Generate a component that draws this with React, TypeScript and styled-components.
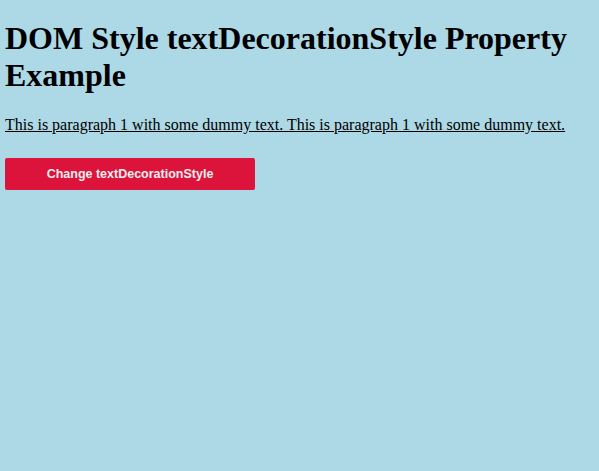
import React, { useState } from 'react'
import styled, { createGlobalStyle } from 'styled-components'

const GlobalStyle = createGlobalStyle`
   body {
      margin: 0 5px;
      background: lightblue;
      font-family: "Liberation Serif", "Times New Roman", serif;
   }
`

const Title = styled.h1`
   font-size: 32px;
   font-weight: bold;
   margin: 20px 0 22px;
   line-height: 37px;
`

const Paragraph = styled.p<{ $decoration: string }>`
   font-size: 16px;
   margin: 16px 0;
   text-decoration: underline;
   text-decoration-style: ${p => p.$decoration};
`

const ChangeButton = styled.button`
   display: block;
   width: 250px;
   height: 32px;
   margin-top: 24px;
   border: none;
   border-radius: 2px;
   background: crimson;
   color: #f4eef0;
   font-family: "Liberation Sans", Arial, sans-serif;
   font-weight: bold;
   font-size: 12.5px;
   cursor: pointer;
`

const styles = ['solid', 'double', 'dotted', 'dashed', 'wavy']

const App: React.FC = () => {
   const [index, setIndex] = useState(0)

   return (
      <>
         <GlobalStyle />
         <Title>DOM Style textDecorationStyle Property Example</Title>
         <Paragraph $decoration={styles[index]}>
            This is paragraph 1 with some dummy text. This is paragraph 1 with some dummy text.
         </Paragraph>
         <ChangeButton onClick={() => setIndex((index + 1) % styles.length)}>
            Change textDecorationStyle
         </ChangeButton>
      </>
   )
}

export default App
